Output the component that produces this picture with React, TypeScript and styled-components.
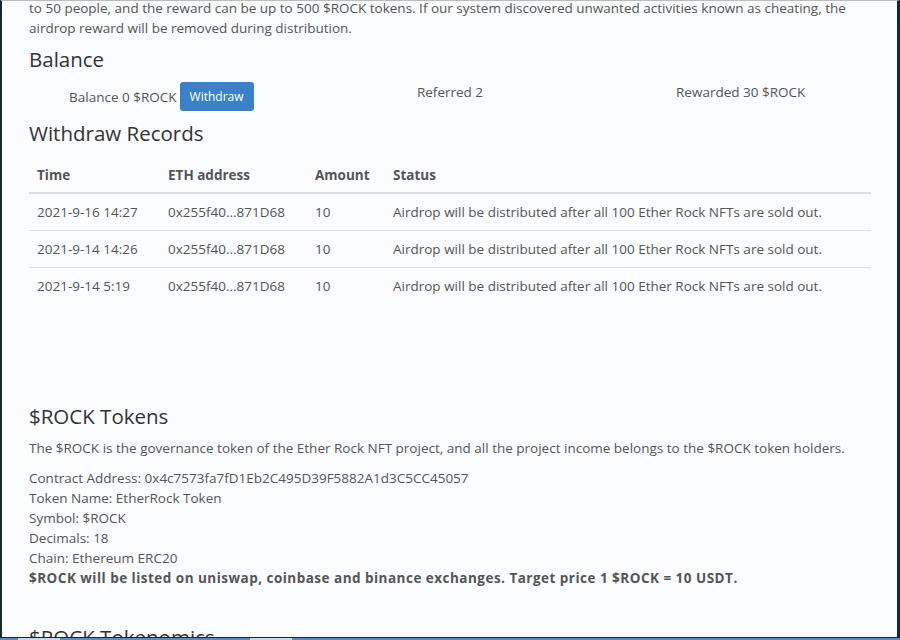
import React from 'react';
import styled, { createGlobalStyle } from 'styled-components';

const GlobalStyle = createGlobalStyle`
  html, body {
    margin: 0;
    padding: 0;
    background: #fafcfe;
  }
  body {
    font-family: "Open Sans", "Liberation Sans", sans-serif;
  }
`;

const Screen = styled.div`
  height: 640px;
  display: flex;
  flex-direction: column;
  overflow: hidden;
`;

const Frame = styled.div`
  flex: 1;
  min-height: 0;
  overflow: hidden;
  border-left: 2px solid #17262e;
  border-right: 3px solid #17262e;
  border-top: 1px solid #bcbcbc;
  border-bottom: 1px solid #17262e;
  background: #fafcfe;
`;

const Taskbar = styled.div`
  flex: none;
  height: 2px;
  background: #5b8dc4;
  display: flex;
  gap: 190px;
  padding-left: 18px;
`;

const TaskTab = styled.span`
  width: 42px;
  background: #c9d8ea;
`;

const Content = styled.div`
  padding: 0 26px 0 27px;
  color: #555;
  font-size: 13.5px;
`;

const Intro = styled.p`
  margin: -3px 0 0;
  line-height: 20px;
`;

const Heading = styled.h3<{ $top?: number }>`
  margin: ${(p) => p.$top ?? 0}px 0 0;
  font-size: 20.5px;
  font-weight: 400;
  color: #333;
  line-height: 30px;
`;

const StatsRow = styled.div`
  display: grid;
  grid-template-columns: repeat(3, 1fr);
  align-items: start;
  margin: 8px 0 8px;
`;

const Stat = styled.div<{ $shift?: number }>`
  display: flex;
  align-items: center;
  justify-content: center;
  gap: 3px;
  line-height: 18px;
  padding-top: 1px;
  transform: translateX(${(p) => p.$shift ?? 0}px);
`;

const WithdrawButton = styled.button`
  height: 29px;
  padding: 0 10px;
  border: none;
  border-radius: 3px;
  background: #3b81c9;
  color: #fff;
  font-family: inherit;
  font-size: 12px;
  margin-top: -2px;
  position: relative;
  top: 1px;
`;

const Table = styled.table`
  width: 100%;
  border-collapse: collapse;
  margin-top: 7px;
`;

const Th = styled.th`
  text-align: left;
  font-weight: 700;
  color: #555;
  padding: 12px 8px 8px;
  border-bottom: 2px solid #dddddd;
  line-height: 17px;
`;

const Td = styled.td`
  padding: 10px 8px 9px;
  line-height: 17px;
  border-bottom: 1px solid #e2e2e2;
  tr:last-child > & {
    border-bottom: none;
  }
`;

const Spacer = styled.div`
  height: 97px;
`;

const Paragraph = styled.p`
  margin: 7px 0 10px;
  line-height: 20px;
`;

const InfoList = styled.div`
  line-height: 20px;
`;

const Strong = styled.div`
  font-weight: 700;
  letter-spacing: 0.48px;
`;

const Tail = styled.div`
  margin-top: 34px;
`;

const records = [
  { time: '2021-9-16 14:27', address: '0x255f40...871D68', amount: 10 },
  { time: '2021-9-14 14:26', address: '0x255f40...871D68', amount: 10 },
  { time: '2021-9-14 5:19', address: '0x255f40...871D68', amount: 10 },
];

const STATUS = 'Airdrop will be distributed after all 100 Ether Rock NFTs are sold out.';

const App: React.FC = () => (
  <Screen>
    <GlobalStyle />
    <Frame>
      <Content>
        <Intro>
          to 50 people, and the reward can be up to 500 $ROCK tokens. If our system discovered unwanted activities known as cheating, the
          <br />
          airdrop reward will be removed during distribution.
        </Intro>

        <Heading $top={6}>Balance</Heading>
        <StatsRow>
          <Stat $shift={-8}>
            Balance 0 $ROCK <WithdrawButton>Withdraw</WithdrawButton>
          </Stat>
          <Stat>Referred 2</Stat>
          <Stat $shift={10}>Rewarded 30 $ROCK</Stat>
        </StatsRow>

        <Heading>Withdraw Records</Heading>
        <Table>
          <thead>
            <tr>
              <Th style={{ width: 115 }}>Time</Th>
              <Th style={{ width: 131 }}>ETH address</Th>
              <Th style={{ width: 62 }}>Amount</Th>
              <Th>Status</Th>
            </tr>
          </thead>
          <tbody>
            {records.map((r) => (
              <tr key={r.time}>
                <Td>{r.time}</Td>
                <Td>{r.address}</Td>
                <Td>{r.amount}</Td>
                <Td>{STATUS}</Td>
              </tr>
            ))}
          </tbody>
        </Table>

        <Spacer />

        <Heading>$ROCK Tokens</Heading>
        <Paragraph>
          The $ROCK is the governance token of the Ether Rock NFT project, and all the project income belongs to the $ROCK token holders.
        </Paragraph>
        <InfoList>
          <div>Contract Address: 0x4c7573fa7fD1Eb2C495D39F5882A1d3C5CC45057</div>
          <div>Token Name: EtherRock Token</div>
          <div>Symbol: $ROCK</div>
          <div>Decimals: 18</div>
          <div>Chain: Ethereum ERC20</div>
          <Strong>$ROCK will be listed on uniswap, coinbase and binance exchanges. Target price 1 $ROCK = 10 USDT.</Strong>
        </InfoList>

        <Tail>
          <Heading>$ROCK Tokenomics</Heading>
        </Tail>
      </Content>
    </Frame>
    <Taskbar>
      <TaskTab />
      <TaskTab />
    </Taskbar>
  </Screen>
);

export default App;
